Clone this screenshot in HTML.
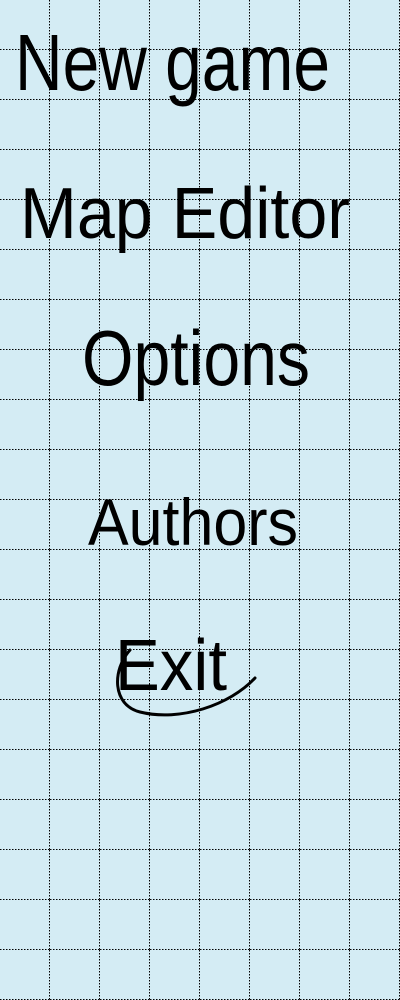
<!DOCTYPE html>
<html><head><style>
html,body{margin:0;padding:0;width:400px;height:1000px;overflow:hidden;background:#d4ecf4}
svg{display:block}
text{font-family:"Liberation Sans",sans-serif;fill:#000;font-weight:normal}
</style></head><body>
<svg width="400" height="1000" viewBox="0 0 400 1000">
<defs>
<pattern id="g" width="50" height="50" patternUnits="userSpaceOnUse">
<line x1="49.5" y1="0" x2="49.5" y2="50" stroke="#000" stroke-width="1" stroke-dasharray="1.5 1.5"/>
<line x1="0" y1="49.5" x2="50" y2="49.5" stroke="#000" stroke-width="1" stroke-dasharray="1.5 1.5"/>
</pattern>
</defs>
<rect width="400" height="1000" fill="#d4ecf4"/>
<rect width="400" height="1000" fill="url(#g)"/>
<text x="15" y="90" font-size="80" textLength="315" lengthAdjust="spacingAndGlyphs">New game</text>
<text x="20" y="238" font-size="72" textLength="330" lengthAdjust="spacingAndGlyphs">Map Editor</text>
<text x="82" y="385" font-size="78" textLength="228" lengthAdjust="spacingAndGlyphs">Options</text>
<text x="88" y="545" font-size="66" textLength="210" lengthAdjust="spacingAndGlyphs">Authors</text>
<text x="115" y="690" font-size="72" textLength="112" lengthAdjust="spacingAndGlyphs">Exit</text>
<path d="M130 650 C112 670 112 705 140 712 C180 722 230 705 255 678" fill="none" stroke="#000" stroke-width="3" stroke-linecap="round"/>
</svg>
</body></html>
